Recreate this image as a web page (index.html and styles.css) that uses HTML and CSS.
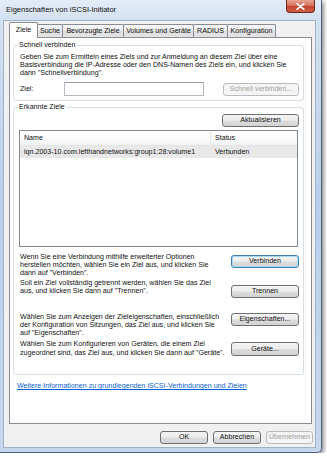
FILE: index.html
```html
<!DOCTYPE html>
<html lang="de">
<head>
<meta charset="utf-8">
<title>Eigenschaften von iSCSI-Initiator</title>
<link rel="stylesheet" href="styles.css">
</head>
<body>
<div class="window">
  <div class="titlebar">
    <span class="title">Eigenschaften von iSCSI-Initiator</span>
    <span class="close"><svg width="9" height="7" viewBox="0 0 9 7"><path d="M1.2 0.8 L7.8 6.2 M7.8 0.8 L1.2 6.2" stroke="#fff" stroke-width="1.7" stroke-linecap="round"/></svg></span>
  </div>
  <div class="client">
    <div class="tabs">
      <span class="tab active t1">Ziele</span>
      <span class="tab t2">Suche</span>
      <span class="tab t3">Bevorzugte Ziele</span>
      <span class="tab t4">Volumes und Geräte</span>
      <span class="tab t5">RADIUS</span>
      <span class="tab t6">Konfiguration</span>
    </div>
    <div class="panel">
      <div class="group g1">
        <div class="legend">Schnell verbinden</div>
        <p class="desc">Geben Sie zum Ermitteln eines Ziels und zur Anmeldung an diesem Ziel über eine<br>Basisverbindung die IP-Adresse oder den DNS-Namen des Ziels ein, und klicken Sie<br>dann "Schnellverbindung".</p>
        <div class="ziel-row">
          <span class="ziel-label">Ziel:</span>
          <span class="input"></span>
          <span class="btn disabled quick">Schnell verbinden...</span>
        </div>
      </div>
      <div class="group g2">
        <div class="legend">Erkannte Ziele</div>
        <div class="refresh-row"><span class="btn refresh">Aktualisieren</span></div>
        <div class="list">
          <div class="list-head"><span class="col-name">Name</span><span class="col-status">Status</span></div>
          <div class="list-row"><span class="col-name">iqn.2003-10.com.lefthandnetworks:group1:28:volume1</span><span class="col-status">Verbunden</span></div>
        </div>
        <div class="action a1">
          <p class="desc">Wenn Sie eine Verbindung mithilfe erweiterter Optionen<br>herstellen möchten, wählen Sie ein Ziel aus, und klicken Sie<br>dann auf "Verbinden".</p>
          <span class="btn default">Verbinden</span>
        </div>
        <div class="action a2">
          <p class="desc">Soll ein Ziel vollständig getrennt werden, wählen Sie das Ziel<br>aus, und klicken Sie dann auf "Trennen".</p>
          <span class="btn">Trennen</span>
        </div>
        <div class="action a3">
          <p class="desc">Wählen Sie zum Anzeigen der Zieleigenschaften, einschließlich<br>der Konfiguration von Sitzungen, das Ziel aus, und klicken Sie<br>auf "Eigenschaften".</p>
          <span class="btn">Eigenschaften...</span>
        </div>
        <div class="action a4">
          <p class="desc">Wählen Sie zum Konfigurieren von Geräten, die einem Ziel<br>zugeordnet sind, das Ziel aus, und klicken Sie dann auf "Geräte".</p>
          <span class="btn">Geräte...</span>
        </div>
      </div>
      <a class="more" href="#">Weitere Informationen zu grundlegenden iSCSI-Verbindungen und Zielen</a>
    </div>
    <div class="footer">
      <span class="btn fbtn">OK</span>
      <span class="btn fbtn">Abbrechen</span>
      <span class="btn fbtn disabled">Übernehmen</span>
    </div>
  </div>
</div>
</body>
</html>
```
FILE: styles.css
```css
* { box-sizing: border-box; }
body {
  margin: 0;
  background: #fff;
  font-family: "Liberation Sans", Arial, sans-serif;
  font-size: 7.1px;
  color: #111;
}
p { margin: 0; }

.window {
  width: 322px;
  height: 453px;
  display: flex;
  flex-direction: column;
  background: linear-gradient(180deg, #e4ecf6 0px, #d3e0f0 20px, #b9cfea 200px, #c6d8ee 453px);
  border-right: 1px solid #4d5d72;
  border-bottom: 1px solid #4d5d72;
  border-radius: 0 0 5px 0;
  box-shadow: 2px 2px 4px rgba(0,0,0,0.45);
}

.titlebar {
  height: 20px;
  display: flex;
  align-items: flex-start;
  flex: none;
}
.title {
  padding-left: 6px;
  line-height: 20px;
  font-size: 7.5px;
  color: #111;
}
.close {
  margin-left: auto;
  margin-right: 6px;
  width: 29px;
  height: 13px;
  border: 1px solid #6d2a1f;
  border-top: none;
  border-radius: 0 0 4px 4px;
  background: linear-gradient(180deg, #e8a493 0%, #d8745c 45%, #c4432a 55%, #d0604a 100%);
  display: flex;
  align-items: center;
  justify-content: center;
}

.client {
  flex: 1;
  margin: 0 5px 4px 3px;
  background: #f0f0f0;
  border: 1px solid #9fb2c9;
  display: flex;
  flex-direction: column;
}

.tabs {
  display: flex;
  align-items: flex-end;
  margin: 1px 0 0 5px;
  position: relative;
  z-index: 1;
}
.tab {
  height: 13px;
  line-height: 12px;
  border: 1px solid #898c95;
  border-bottom: none;
  border-radius: 2px 2px 0 0;
  background: linear-gradient(180deg, #f7f7f7 0%, #ebebeb 50%, #dedede 51%, #e4e4e4 100%);
  text-align: center;
  margin-left: -1px;
  white-space: nowrap;
}
.tab.active {
  height: 16px;
  margin-bottom: -1px;
  margin-left: 0;
  background: #fff;
  line-height: 14px;
  position: relative;
  z-index: 2;
}
.t1 { width: 29px; }
.t2 { width: 26px; }
.t3 { width: 62px; }
.t4 { width: 71px; }
.t5 { width: 35px; }
.t6 { width: 49px; }

.panel {
  height: 387px;
  margin: 0 3px 0 5px;
  background: #fff;
  border: 1px solid #898c95;
  padding: 0 7px 0 3px;
  display: flex;
  flex-direction: column;
  flex: none;
}

.group {
  border: 1px solid #d5dfe5;
  border-radius: 3px;
  display: flex;
  flex-direction: column;
  padding: 0 4px 0 6px;
}
.g1 { margin-top: 7px; padding-bottom: 4px; }
.g2 { margin-top: 6px; padding-bottom: 17px; }
.legend {
  align-self: flex-start;
  margin: -5px 0 0 -2px;
  padding: 0 1px;
  line-height: 8px;
  background: #fff;
}

.desc {
  line-height: 8px;
  white-space: nowrap;
}
.g1 .desc { margin-top: 4px; }

.ziel-row {
  margin-top: 5px;
  height: 14px;
  display: flex;
  align-items: center;
}
.ziel-label { width: 44px; }
.input {
  width: 140px;
  height: 14px;
  border: 1px solid #b5b8c0;
  border-top-color: #9a9ea8;
  border-radius: 1px;
  background: #fff;
}
.quick { margin-left: auto; width: 76px; }

.btn {
  display: inline-block;
  height: 13px;
  line-height: 11px;
  border: 1px solid #707070;
  border-radius: 3px;
  background: linear-gradient(180deg, #f4f4f4 0%, #ececec 48%, #dedede 52%, #d2d2d2 100%);
  text-align: center;
  white-space: nowrap;
  color: #111;
}
.btn.disabled {
  border-color: #b8bcc0;
  background: #f4f4f4;
  color: #a0a0a0;
}
.btn.default {
  border-color: #3c7fb1;
  box-shadow: inset 0 0 0 1px #a8dcf5;
}

.refresh-row {
  margin-top: 3px;
  display: flex;
  justify-content: flex-end;
}
.refresh { width: 77px; }

.list {
  margin: 3px 1px 0 -1px;
  height: 117px;
  border: 1px solid #828790;
  background: #fff;
}
.list-head {
  height: 15px;
  display: flex;
  align-items: center;
  border-bottom: 1px solid #e5e5e5;
  background: linear-gradient(180deg, #fff 0%, #fafafa 60%, #f1f2f4 100%);
}
.list-row {
  height: 12px;
  display: flex;
  align-items: center;
  background: #e8e8e8;
}
.col-name {
  width: 191px;
  padding-left: 4px;
  align-self: stretch;
  display: flex;
  align-items: center;
}
.list-head .col-name { border-right: 1px solid #e3e5e8; }
.col-status { padding-left: 4px; }

.action {
  display: grid;
  grid-template-columns: 1fr 68px;
  align-items: start;
}
.a1 { margin-top: 6px; }
.a1 .btn { margin-top: 2px; }
.a2 { margin-top: 2px; }
.a2 .btn { margin-top: 6px; }
.a3 { margin-top: 15px; }
.a4 { margin-top: 3px; }
.a4 .desc { line-height: 8.5px; }
.a4 .btn { margin-top: 2px; height: 14px; line-height: 12px; }

.more {
  margin: 7px 0 0 4px;
  line-height: 8px;
  color: #0a5fcf;
  text-decoration: underline;
  align-self: flex-start;
}

.footer {
  margin-top: 7px;
  padding-right: 2px;
  display: flex;
  justify-content: flex-end;
  gap: 5px;
}
.fbtn { width: 48px; }
.fbtn.disabled { width: 47px; }
```
